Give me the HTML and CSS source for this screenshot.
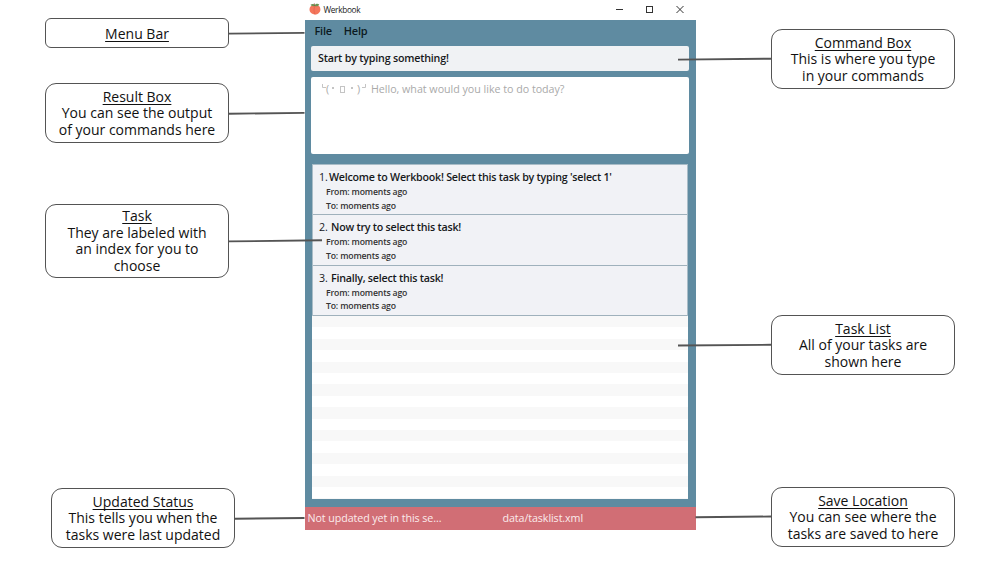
FILE: index.html
```
<!DOCTYPE html>
<html lang="en">
<head>
<meta charset="utf-8">
<title>Werkbook</title>
<link rel="stylesheet" href="styles.css">
</head>
<body>
<main class="diagram">
  <section class="notes notes-left">
    <div class="note note-menu"><u>Menu Bar</u></div>
    <div class="note note-result"><u>Result Box</u><br>You can see the output<br>of your commands here</div>
    <div class="note note-task"><u>Task</u><br>They are labeled with<br>an index for you to<br>choose</div>
    <div class="note note-updated"><u>Updated Status</u><br>This tells you when the<br>tasks were last updated</div>
  </section>

  <section class="window">
    <header class="titlebar">
      <svg class="peach" width="12" height="12" viewBox="0 0 12 12">
        <path d="M5.800 2.600C3 1.200.5 3.400.5 6.300C.5 9.600 3 11.300 5.900 11.600C9 11.300 11.500 9.500 11.400 6.200C11.300 3.200 8.800 1.400 5.800 2.600Z" fill="#f4775c"/>
        <path d="M6 3C4.500 5.500 4.800 9 6 11.500" fill="none" stroke="#df5a48" stroke-width=".6"/>
        <path d="M5.700 3C4.500 3.500 2.500 3.300 1.500 1.800C3.200.6 5 .9 5.700 2.200C6.500.6 8.500.2 10.300 1.400C9.500 3.200 7.500 3.700 5.700 3Z" fill="#699451"/>
        <path d="M5.600 3L5.300.4" stroke="#8a5b3c" stroke-width=".8"/>
      </svg>
      <span class="app-name">Werkbook</span>
      <svg class="controls" width="72" height="10" viewBox="0 0 72 10" fill="none" stroke="#333" stroke-width="1">
        <path d="M1 5.500H8"/>
        <rect x="31.500" y="2.500" width="6" height="6"/>
        <path d="M61.500 2L68.500 9M68.500 2L61.500 9"/>
      </svg>
    </header>
    <nav class="menu"><span class="menu-file">File</span><span class="menu-help">Help</span></nav>
    <div class="command"><span>Start by typing something!</span></div>
    <div class="result"><span class="face"><svg width="46" height="12" viewBox="0 0 46 12" fill="none" stroke="#c4c4c4"><path d="M1.500 0V3.500H5M44.500 0V3.500H41"/><rect x="19.500" y="2.500" width="4" height="6"/><path d="M11 4H13M30 4H32" stroke-width="2"/></svg><i class="paren-open">(</i><i class="paren-close">)</i></span><span class="hello">Hello, what would you like to do today?</span></div>
    <div class="list">
      <article class="task">
        <h2><span class="index">1.</span><span class="name first-name">Welcome to Werkbook! Select this task by typing 'select 1'</span></h2>
        <p>From: moments ago</p><p>To: moments ago</p>
      </article>
      <article class="task">
        <h2><span class="index">2.</span><span class="name">Now try to select this task!</span></h2>
        <p>From: moments ago</p><p>To: moments ago</p>
      </article>
      <article class="task">
        <h2><span class="index">3.</span><span class="name">Finally, select this task!</span></h2>
        <p>From: moments ago</p><p>To: moments ago</p>
      </article>
      <div class="stripes"></div>
    </div>
    <footer class="status"><span class="sync">Not updated yet in this se...</span><span class="location">data/tasklist.xml</span></footer>
  </section>

  <section class="notes notes-right">
    <div class="note note-command"><u>Command Box</u><br>This is where you type<br>in your commands</div>
    <div class="note note-list"><u>Task List</u><br>All of your tasks are<br>shown here</div>
    <div class="note note-save"><u>Save Location</u><br>You can see where the<br>tasks are saved to here</div>
  </section>

  <svg class="connectors" width="1000" height="563" viewBox="0 0 1000 563">
    <path d="M229 33.600L304.500 32.900M229 113.700L304.500 112.900M229 241.400L322 240.300M235 518.700L304.500 518M678 59.600L771 58.700M678 345.500L771 344.800M695.500 517.300L771 516.500"/>
  </svg>
</main>
</body>
</html>
```
FILE: styles.css
```
* { box-sizing: border-box; }
body { margin: 0; background: #fff; }
.diagram {
  position: relative;
  display: flex;
  width: 1000px;
  height: 563px;
  overflow: hidden;
}
.connectors { position: absolute; inset: 0; fill: none; stroke: #545454; stroke-width: 1.9; }

.notes { display: flex; flex-direction: column; }
.notes-left { width: 304.5px; padding: 18px 0 0 45px; }
.notes-right { width: 304.5px; padding: 29px 0 0 75.5px; }
.note {
  flex: none;
  width: 184px;
  height: 60px;
  padding-top: 4.6px;
  border: 1px solid #545454;
  border-radius: 11px;
  font: 14px/16.6px "Open Sans", sans-serif;
  letter-spacing: 0;
  color: #111;
  text-align: center;
  white-space: nowrap;
}
.note u { text-underline-offset: 2px; text-decoration-thickness: 1px; text-decoration-skip-ink: none; }
.note-menu { height: 30px; padding-top: 6.6px; border-radius: 6px; }
.note-result { margin-top: 35px; }
.note-task { height: 74px; margin-top: 61px; padding-top: 3px; }
.note-updated { margin: 210px 0 0 6px; }
.note-list { margin-top: 226px; }
.note-save { margin-top: 112px; }

.window {
  display: flex;
  flex-direction: column;
  flex: none;
  width: 391px;
  height: 529.5px;
  background: #5f8ba1;
  font-family: "Open Sans", sans-serif;
  color: #17191c;
  white-space: nowrap;
}
.titlebar { display: flex; align-items: center; height: 20px; padding: 0 9px 0 4px; background: #fff; }
.peach { margin-top: -2px; }
.app-name { margin: -1px 0 0 3px; font-size: 8.300px; letter-spacing: -0.350px; color: #222; }
.controls { margin: -2px 0 0 auto; }
.menu { display: flex; gap: 12px; height: 25.500px; padding: 0 10px; font-size: 11px; font-weight: 600; line-height: 22px; letter-spacing: -0.25px; color: #0c1a22; }
.command {
  height: 25.500px;
  margin: 0 6.500px;
  padding-left: 7px;
  background: #f0f2f4;
  border-radius: 2px;
  font-size: 10.700px;
  font-weight: 600;
  line-height: 24px;
  letter-spacing: -0.2px;
}
.result {
  display: flex;
  height: 76.500px;
  margin: 6px 6.500px 0;
  padding: 4px 0 0 10px;
  background: #fff;
  border-radius: 2px;
  font-size: 10.700px;
  font-weight: 500;
  line-height: 16px;
  letter-spacing: -0.02px;
  color: #aaa;
}
.face { position: relative; width: 50px; }
.face svg { display: block; margin-top: 3px; }
.face i { position: absolute; top: 0; font-style: normal; }
.face .paren-open { left: 5px; }
.face .paren-close { left: 36px; }
.list {
  display: flex;
  flex-direction: column;
  height: 335px;
  margin: 10.500px 7.500px 0;
  border: 1px solid #a9bcc7;
  border-bottom: 0;
  background: #fff;
}
.task {
  height: 50.300px;
  padding: 4px 0 0 6px;
  border-bottom: 1px solid #9fb1bc;
  background: #f1f2f6;
}
.task h2 { display: flex; margin: 0; font-size: 10.700px; font-weight: 600; line-height: 17px; letter-spacing: -0.24px; }
.task .index { width: 12px; font-weight: 500; letter-spacing: 0; }
.task .first-name { margin-left: -2px; }
.task p { margin: 0 0 0 7px; font-size: 8.700px; font-weight: 600; line-height: 13.500px; letter-spacing: -0.17px; color: #333; }
.stripes {
  flex: 1;
  margin: 0 -1px;
  background: repeating-linear-gradient(#f8f8f8 0 11.400px, #fff 11.400px 22.800px);
}
.status {
  display: flex;
  height: 22.500px;
  margin-top: auto;
  padding-left: 3px;
  background: #d16e75;
  font-size: 10.700px;
  font-weight: 500;
  line-height: 22px;
  letter-spacing: -0.08px;
  color: #fbebec;
}
.sync { width: 195px; }
```
